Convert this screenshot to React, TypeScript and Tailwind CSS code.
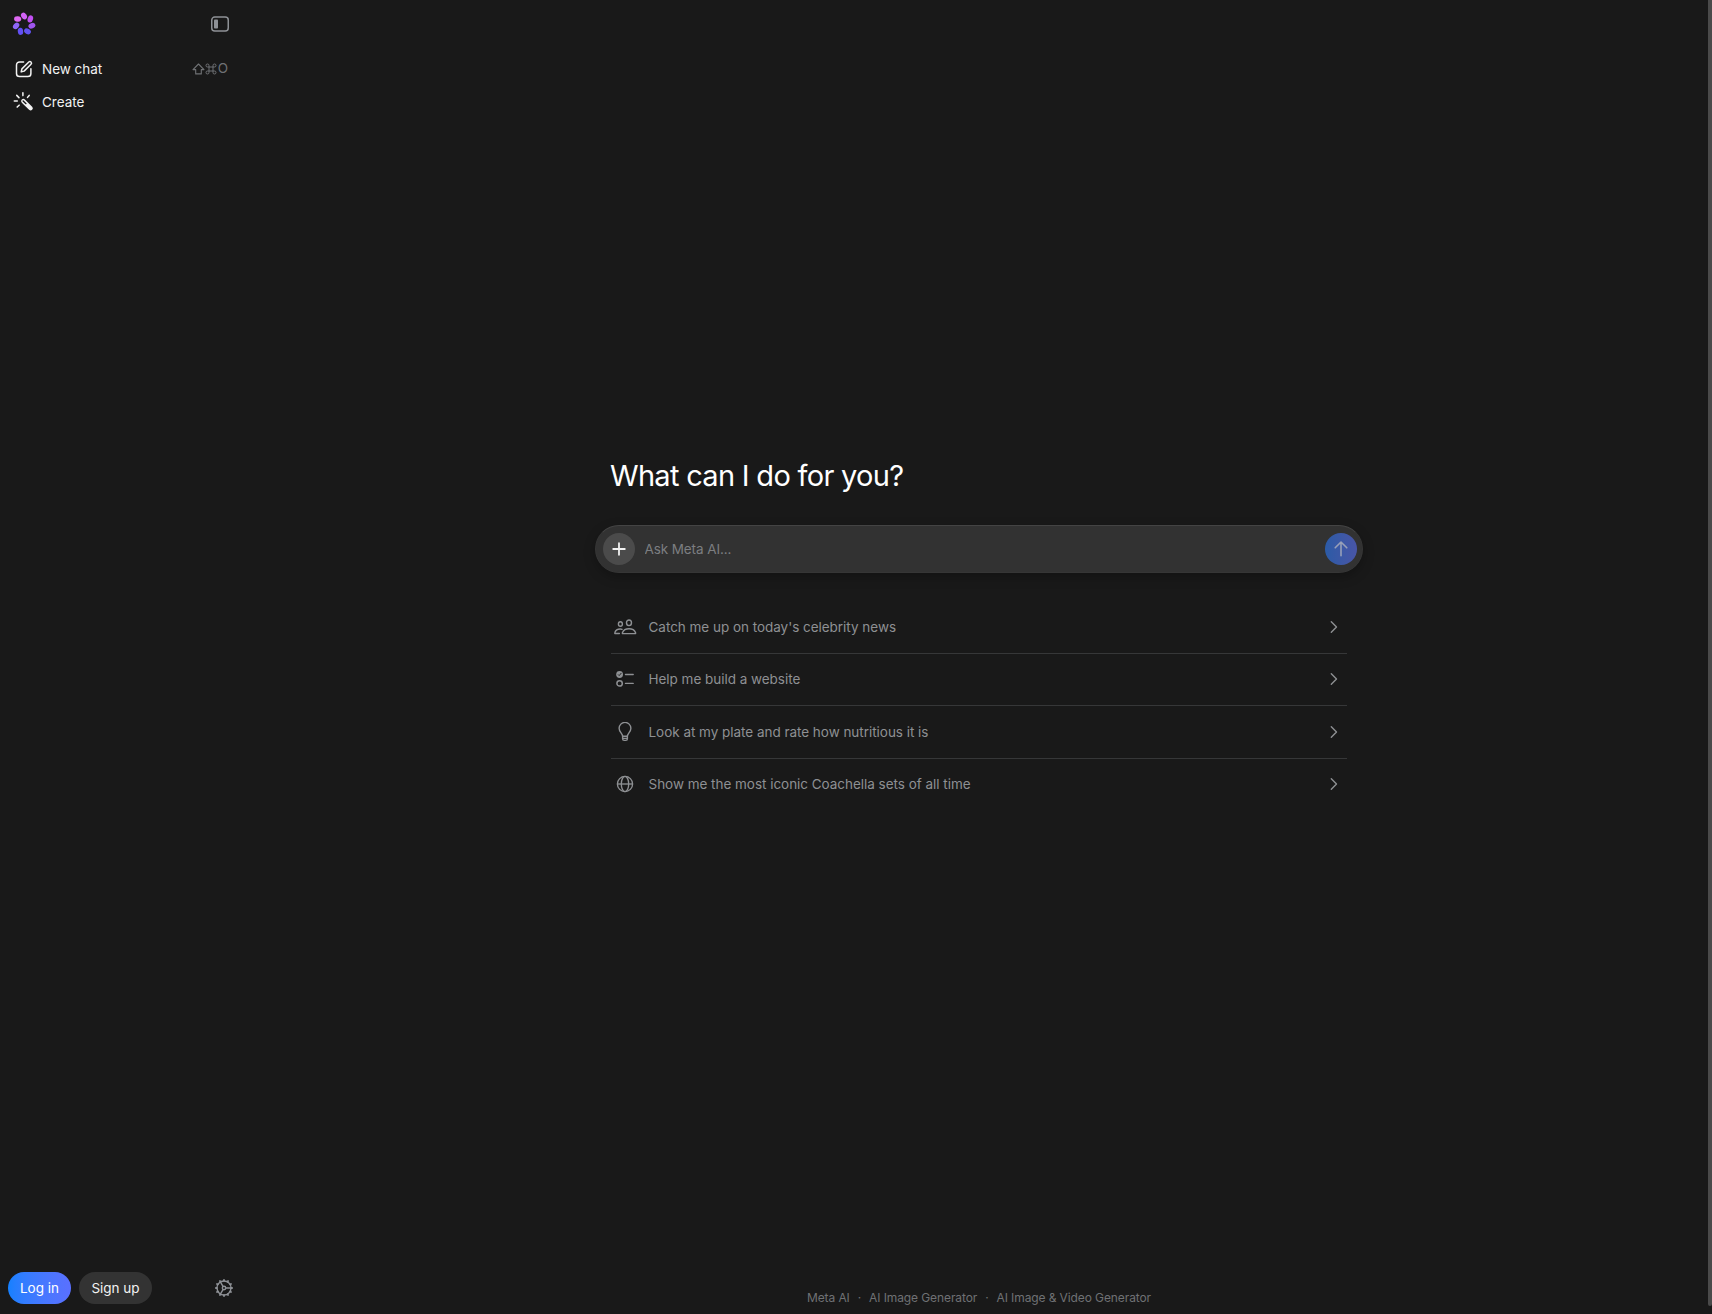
import React from "react";

type IconProps = { className?: string };

const petals = [
  { angle: 0, color: "#d263f6" },
  { angle: 51.4, color: "#c24ff3" },
  { angle: 102.9, color: "#a055ee" },
  { angle: 154.3, color: "#6152f0" },
  { angle: 205.7, color: "#6250f4" },
  { angle: 257.1, color: "#8f66f8" },
  { angle: 308.6, color: "#dd68f2" },
];

const LogoIcon = ({ className }: IconProps) => (
  <svg viewBox="0 0 24 24" className={className}>
    {petals.map((p) => (
      <g key={p.angle} transform={`rotate(${p.angle} 12 12)`}>
        <ellipse cx="12" cy="3.9" rx="2.7" ry="3.6" fill={p.color} transform="rotate(-34 12 3.9)" />
      </g>
    ))}
  </svg>
);

const SidebarIcon = ({ className }: IconProps) => (
  <svg viewBox="0 0 20 20" fill="none" className={className}>
    <rect x="1.75" y="3.05" width="16.5" height="13.9" rx="3" stroke="currentColor" strokeWidth="1.5" />
    <rect x="4" y="5.4" width="4" height="9.2" rx="0.8" fill="currentColor" />
  </svg>
);

const ComposeIcon = ({ className }: IconProps) => (
  <svg viewBox="0 0 20 20" fill="none" stroke="currentColor" strokeWidth="1.5" strokeLinecap="round" strokeLinejoin="round" className={className}>
    <path d="M9.6 2.9H5.6A3.1 3.1 0 0 0 2.5 6v8.4a3.1 3.1 0 0 0 3.1 3.1h8.2a3.1 3.1 0 0 0 3.1-3.1v-4.6" />
    <path d="M7.2 12.9l.7-3 6.9-6.9a1.55 1.55 0 0 1 2.2 2.2l-6.9 6.9-2.9.8z" />
  </svg>
);

const WandIcon = ({ className }: IconProps) => (
  <svg viewBox="0 0 20 20" fill="none" stroke="currentColor" strokeWidth="1.4" strokeLinecap="round" className={className}>
    <path d="M9 1.6v2.6M3.4 4l2 2M14.7 4l-1.5 1.8M1.2 9h2.7M3.8 14.6l1.8-1.7" />
    <path d="M9.4 9.2l6.6 6.5" strokeWidth="4" />
    <path d="M9.2 9l2.6 2.5" stroke="#191919" strokeWidth="1.2" />
  </svg>
);

const ShiftIcon = ({ className }: IconProps) => (
  <svg viewBox="0 0 13 12" fill="none" stroke="currentColor" strokeWidth="1.1" strokeLinejoin="round" className={className}>
    <path d="M6.5 1L1 6.6h2.7v4.3h5.6V6.6H12z" />
  </svg>
);

const CommandIcon = ({ className }: IconProps) => (
  <svg viewBox="0 0 12 12" fill="none" stroke="currentColor" strokeWidth="1" className={className}>
    <path d="M4 4h4v4H4zM4 4H2.6A1.5 1.5 0 1 1 4 2.6zM8 4V2.6A1.5 1.5 0 1 1 9.4 4zM8 8h1.4A1.5 1.5 0 1 1 8 9.4zM4 8v1.4A1.5 1.5 0 1 1 2.6 8z" />
  </svg>
);

const PlusIcon = ({ className }: IconProps) => (
  <svg viewBox="0 0 20 20" fill="none" stroke="currentColor" strokeWidth="1.8" strokeLinecap="round" className={className}>
    <path d="M10 4.2v11.6M4.2 10h11.6" />
  </svg>
);

const ArrowUpIcon = ({ className }: IconProps) => (
  <svg viewBox="0 0 20 20" fill="none" stroke="currentColor" strokeWidth="1.6" strokeLinecap="round" strokeLinejoin="round" className={className}>
    <path d="M10 16.8V3.2M4.2 8.8L10 3l5.8 5.8" />
  </svg>
);

const PeopleIcon = ({ className }: IconProps) => (
  <svg viewBox="0 0 24 20" fill="none" stroke="currentColor" strokeWidth="1.4" strokeLinecap="round" strokeLinejoin="round" className={className}>
    <ellipse cx="16" cy="5.8" rx="2.5" ry="2.8" />
    <ellipse cx="7.4" cy="7" rx="2" ry="2.2" />
    <path d="M9.9 16.6c-.5 0-.7-.4-.5-.9.9-2.3 3.4-3.9 6.6-3.9s5.7 1.6 6.6 3.9c.2.5 0 .9-.5.9z" />
    <path d="M6.4 16.5H2.3c-.4 0-.7-.3-.5-.8.7-2.1 2.7-3.7 5.4-3.7.7 0 1.3.1 1.9.3" />
  </svg>
);

const TaskIcon = ({ className }: IconProps) => (
  <svg viewBox="0 0 20 20" fill="none" stroke="currentColor" strokeWidth="1.5" strokeLinecap="round" className={className}>
    <circle cx="4.6" cy="5.5" r="3.4" fill="currentColor" stroke="none" />
    <path d="M3.3 5.7l.9.9 1.9-2.3" stroke="#191919" strokeWidth="0.9" />
    <circle cx="4.6" cy="14.4" r="2.7" />
    <path d="M10.5 5.5h7.7M10.5 14.4h7.7" strokeWidth="1.4" />
  </svg>
);

const BulbIcon = ({ className }: IconProps) => (
  <svg viewBox="0 0 20 20" fill="none" stroke="currentColor" strokeWidth="1.4" strokeLinecap="round" strokeLinejoin="round" className={className}>
    <path d="M7.6 14.3c0-2.7-3.5-4.3-3.5-8a5.9 5.9 0 0 1 11.8 0c0 3.7-3.5 5.3-3.5 8z" />
    <path d="M7.6 14.3v2.5a1.6 1.6 0 0 0 1.6 1.6h1.6a1.6 1.6 0 0 0 1.6-1.6v-2.5M8 16.4h4" />
  </svg>
);

const GlobeIcon = ({ className }: IconProps) => (
  <svg viewBox="0 0 20 20" fill="none" stroke="currentColor" strokeWidth="1.35" className={className}>
    <circle cx="10" cy="10" r="7.6" />
    <ellipse cx="10" cy="10" rx="3.7" ry="7.6" />
    <path d="M2.4 10h15.2" />
  </svg>
);

const ChevronIcon = ({ className }: IconProps) => (
  <svg viewBox="0 0 16 16" fill="none" stroke="currentColor" strokeWidth="1.4" strokeLinecap="round" strokeLinejoin="round" className={className}>
    <path d="M5.3 2.8L10.5 8l-5.2 5.2" />
  </svg>
);

const teeth = [0, 30, 60, 90, 120, 150, 180, 210, 240, 270, 300, 330];

const SettingsIcon = ({ className }: IconProps) => (
  <svg viewBox="0 0 20 20" fill="none" stroke="currentColor" strokeWidth="1.4" strokeLinecap="round" className={className}>
    <circle cx="10" cy="10" r="7" />
    {teeth.map((t) => (
      <path key={t} d="M10 2.8V1.9" strokeWidth="1.8" transform={`rotate(${t} 10 10)`} />
    ))}
    <circle cx="10" cy="10" r="1.7" />
    <path d="M11.9 10H17M9 8.4L6.5 4.1M9 11.6l-2.5 4.3" />
  </svg>
);

const suggestions = [
  { text: "Catch me up on today's celebrity news", icon: PeopleIcon, row: "h-[53px] border-b", size: "h-5 w-6" },
  { text: "Help me build a website", icon: TaskIcon, row: "h-[52px] border-b pb-px", size: "h-5 w-5" },
  { text: "Look at my plate and rate how nutritious it is", icon: BulbIcon, row: "h-[53px] border-b", size: "h-5 w-5" },
  { text: "Show me the most iconic Coachella sets of all time", icon: GlobeIcon, row: "h-[50px]", size: "h-5 w-5" },
];

const Sidebar = () => {
  return (
    <aside className="flex w-[246px] shrink-0 flex-col justify-between">
      <div>
        <div className="flex h-12 items-center justify-between pl-3 pr-4">
          <LogoIcon className="h-6 w-6" />
          <button type="button" className="text-[#8e9196]">
            <SidebarIcon className="h-5 w-5" />
          </button>
        </div>
        <nav className="mt-1 text-[13.5px] tracking-[-0.03px] text-[#f2f2f2]">
          <button type="button" className="flex h-[33px] w-full items-center pl-3.5 pr-[18px]">
            <ComposeIcon className="h-5 w-5" />
            <span className="ml-2 pt-0.5">New chat</span>
            <span className="ml-auto flex items-center text-[#6f7174]">
              <ShiftIcon className="h-3 w-[13px]" />
              <CommandIcon className="h-3 w-3" />
              <span className="ml-px pt-px leading-none">O</span>
            </span>
          </button>
          <button type="button" className="flex h-[33px] w-full items-center pl-[13px]">
            <WandIcon className="h-[22px] w-[22px]" />
            <span className="ml-[7px] pt-0.5">Create</span>
          </button>
        </nav>
      </div>
      <div className="flex items-center gap-2 pb-2.5 pl-2 pr-3 text-[13.5px]">
        <button type="button" className="h-8 w-[63px] rounded-full bg-linear-to-r from-[#1480ff] to-[#5a70ff] text-white">
          Log in
        </button>
        <button type="button" className="h-8 w-[73px] rounded-full bg-[#333333] text-[#f2f2f2]">
          Sign up
        </button>
        <button type="button" className="ml-auto text-[#8e9196]">
          <SettingsIcon className="h-5 w-5" />
        </button>
      </div>
    </aside>
  );
};

const App = () => {
  return (
    <div className="flex h-screen w-full overflow-hidden bg-[#191919] font-['Inter',sans-serif]">
      <Sidebar />
      <main className="flex flex-1 flex-col items-center">
        <div className="w-[768px] pt-[456px]">
          <h1 className="px-[15px] text-[29px] leading-[40px] tracking-[-0.7px] text-white">What can I do for you?</h1>
          <div className="mt-[29px] flex h-12 items-center rounded-full border border-t-[#444444] border-[#363636] bg-[#323232] pl-[7px] pr-[5px] shadow-[0_4px_12px_rgba(0,0,0,0.25)]">
            <button type="button" className="flex h-8 w-8 items-center justify-center rounded-full bg-[#4b4b4b] text-[#f2f2f2]">
              <PlusIcon className="h-5 w-5" />
            </button>
            <input
              type="text"
              placeholder="Ask Meta AI..."
              className="ml-[9.5px] flex-1 bg-transparent text-[13.5px] tracking-[-0.1px] text-white outline-none placeholder:text-[#7c7e81]"
            />
            <button type="button" className="flex h-8 w-8 items-center justify-center rounded-full bg-linear-to-r from-[#2b5ba6] to-[#4855a6] text-[#98a0b8]">
              <ArrowUpIcon className="h-5 w-5" />
            </button>
          </div>
          <ul className="mt-7 px-4">
            {suggestions.map((item) => (
              <li key={item.text} className={`flex items-center border-[#363738] text-[#8e9093] ${item.row}`}>
                <span className="ml-0.5 flex w-6 justify-center">
                  <item.icon className={item.size} />
                </span>
                <span className="ml-[11.5px] text-[13.5px] tracking-[-0.03px]">{item.text}</span>
                <ChevronIcon className="ml-auto mr-[5px] h-4 w-4" />
              </li>
            ))}
          </ul>
        </div>
        <footer className="mb-2 mt-auto flex items-center gap-2 text-xs tracking-[-0.1px] text-[#6f7174]">
          <span>Meta AI</span>
          <span>·</span>
          <span>AI Image Generator</span>
          <span>·</span>
          <span>AI Image &amp; Video Generator</span>
        </footer>
      </main>
      {/* scrollbar thumb */}
      <div className="absolute right-0 top-0 h-[1306px] w-1 rounded-b-sm bg-[#4a4a4a]" />
    </div>
  );
};

export default App;
